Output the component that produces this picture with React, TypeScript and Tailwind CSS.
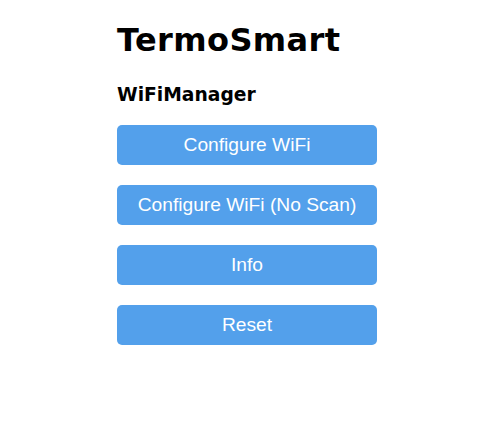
export default function App() {
  const buttons = ["Configure WiFi", "Configure WiFi (No Scan)", "Info", "Reset"];
  return (
    <div className="w-[487px] h-[446px] bg-white flex justify-center pl-[7px]">
      <div className="w-[260px] flex flex-col">
        <h1
          className="text-[32px] font-bold text-black mt-[22px] leading-[37px] tracking-[0.4px]"
          style={{ fontFamily: "Verdana, 'DejaVu Sans', sans-serif" }}
        >
          TermoSmart
        </h1>
        <h3
          className="text-[18.72px] font-bold text-black mt-[25px] leading-[22px]"
          style={{ fontFamily: "Verdana, 'DejaVu Sans', sans-serif" }}
        >
          WiFiManager
        </h3>
        <div className="flex flex-col gap-[20px] mt-[19px]">
          {buttons.map((b) => (
            <button
              key={b}
              className="w-full h-[40px] rounded-[5px] bg-[#53a0eb] text-white text-[19.2px] leading-[40px] font-['Liberation_Sans',Arial,sans-serif]"
            >
              {b}
            </button>
          ))}
        </div>
      </div>
    </div>
  );
}
